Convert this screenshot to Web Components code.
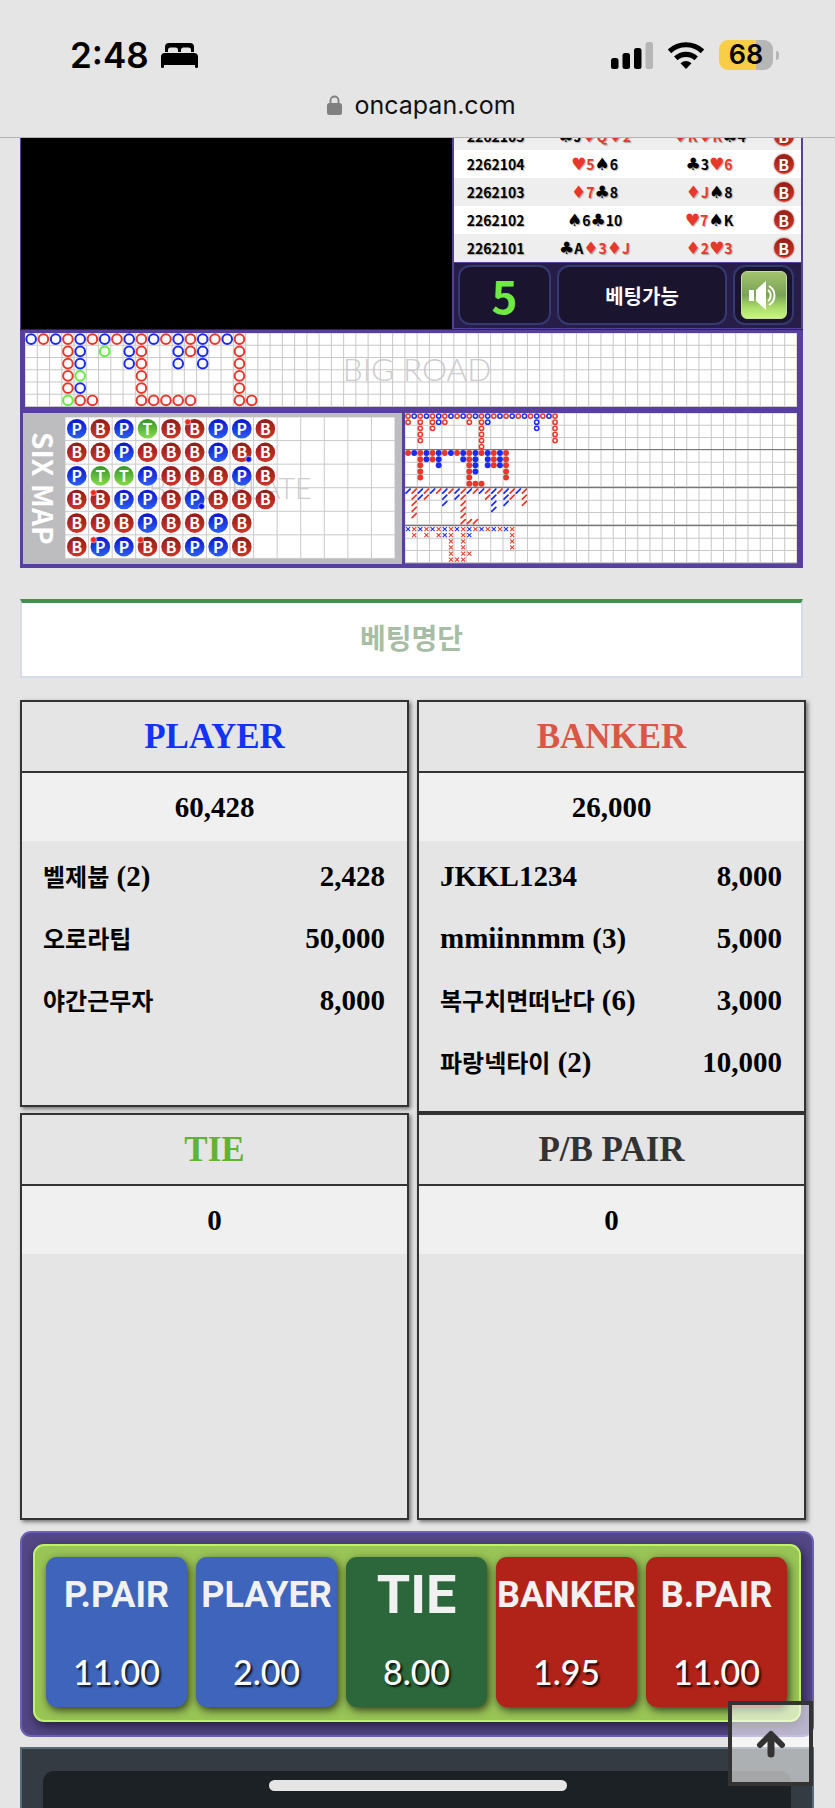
<!DOCTYPE html>
<html lang="ko">
<head>
<meta charset="utf-8">
<meta name="viewport" content="width=device-width, initial-scale=1">
<title>oncapan.com</title>
<style>
  body {
    margin: 0;
    background: #e5e5e5;
    color: #000;
    font-family: "Noto Sans CJK KR", sans-serif;
  }

  .page {
    display: flex;
    flex-direction: column;
    min-height: 100vh;
  }

  main {
    flex: 1;
    display: flex;
    flex-direction: column;
    padding: 0 21px 0 20px;
  }

  .board {
    margin-right: 11px;
    background: #56409c;
  }

  .top {
    display: grid;
    grid-template-columns: 432fr 351fr;
    height: 191px;
  }

  .video {
    background: #000;
    border-left: 1px solid #56409c;
  }

  .side {
    display: flex;
    flex-direction: column;
    border: solid #56409c;
    border-width: 0 2px;
    min-width: 0;
  }

  .lists {
    display: grid;
    grid-template-columns: 1fr 1fr;
    column-gap: 8px;
    align-items: start;
    margin: 22px 8px 11px 0;
  }
</style>
</head>
<body>
<div class="page">
  <phone-bar time="2:48" battery="68">oncapan.com</phone-bar>
  <main>
    <section class="board">
      <div class="top">
        <div class="video"></div>
        <div class="side">
          <game-history></game-history>
          <game-controls count="5">베팅가능</game-controls>
        </div>
      </div>
      <road-board></road-board>
    </section>

    <list-title>베팅명단</list-title>

    <div class="lists">
      <bet-list heading="PLAYER" color="#1432f5" total="60,428">
        <bet-row amount="2,428"><span lang="ko">벨제붑</span> (2)</bet-row>
        <bet-row amount="50,000"><span lang="ko">오로라팁</span></bet-row>
        <bet-row amount="8,000"><span lang="ko">야간근무자</span></bet-row>
      </bet-list>
      <bet-list heading="BANKER" color="#d95745" total="26,000">
        <bet-row amount="8,000">JKKL1234</bet-row>
        <bet-row amount="5,000">mmiinnmm (3)</bet-row>
        <bet-row amount="3,000"><span lang="ko">복구치면떠난다</span> (6)</bet-row>
        <bet-row amount="10,000"><span lang="ko">파랑넥타이</span> (2)</bet-row>
      </bet-list>
      <bet-list heading="TIE" color="#62b236" total="0"></bet-list>
      <bet-list heading="P/B PAIR" color="#333" total="0"></bet-list>
    </div>

    <bet-panel>
      <bet-button color="#3e65bb" odds="11.00">P.PAIR</bet-button>
      <bet-button color="#3e65bb" odds="2.00">PLAYER</bet-button>
      <bet-button color="#2b673a" odds="8.00" size="large">TIE</bet-button>
      <bet-button color="#b12318" odds="1.95">BANKER</bet-button>
      <bet-button color="#b12318" odds="11.00">B.PAIR</bet-button>
    </bet-panel>

    <chip-tray></chip-tray>
  </main>
</div>
<scroll-top></scroll-top>
<home-indicator></home-indicator>

<script>
const RED = '#e8382b';
const BLUE = '#1a2cf4';
const GREEN = '#62ee3c';

class PhoneBar extends HTMLElement {
  constructor() {
    super();
    this.attachShadow({ mode: 'open' });
  }

  connectedCallback() {
    this.shadowRoot.innerHTML = `
      <style>
        :host {
          display: block;
          box-sizing: border-box;
          height: 138px;
          padding-top: 32px;
          border-bottom: 1px solid #b4b4b4;
          font-family: Inter, sans-serif;
        }
        .status {
          display: flex;
          justify-content: space-between;
          padding: 0 56px 0 70px;
          height: 46px;
          align-items: center;
        }
        .left, .right, .url {
          display: flex;
          align-items: center;
        }
        .left { gap: 12px; }
        .right { gap: 15px; }
        .time {
          font-size: 35px;
          font-weight: 600;
        }
        .battery {
          display: flex;
          align-items: center;
          gap: 3px;
        }
        .level {
          width: 54px;
          height: 30px;
          border-radius: 9px;
          background: linear-gradient(90deg, #f8ce46 68%, #b6b6b6 68%);
          font-size: 27px;
          font-weight: 600;
          line-height: 30px;
          text-align: center;
        }
        .nub {
          width: 3px;
          height: 9px;
          border-radius: 0 3px 3px 0;
          background: #b6b6b6;
        }
        .url {
          justify-content: center;
          gap: 12px;
          height: 54px;
          padding-left: 8px;
          font-size: 25px;
          color: #111;
        }
        svg { display: block; }
      </style>
      <div class="status">
        <div class="left">
          <span class="time">${this.getAttribute('time')}</span>
          <svg width="37" height="25" viewBox="0 0 37 25">
            <path d="M4 9V4q0-4 4-4h21q4 0 4 4v5h-3V7q0-2.500-2.500-2.500h-5Q20 4.500 20 7v2h-3V7q0-2.500-2.500-2.500h-5Q7 4.500 7 7v2z"/>
            <path d="M0 14q0-4 4-4h29q4 0 4 4v10q0 1-1.500 1T34 24v-2H3v2q0 1-1.500 1T0 24z"/>
          </svg>
        </div>
        <div class="right">
          <svg width="42" height="27" viewBox="0 0 42 27">
            <rect x="0" y="16" width="7.500" height="11" rx="2.500"/>
            <rect x="11.500" y="11" width="7.500" height="16" rx="2.500"/>
            <rect x="23" y="6" width="7.500" height="21" rx="2.500"/>
            <rect x="34.500" y="0" width="7.500" height="27" rx="2.500" fill="#b6b6b6"/>
          </svg>
          <svg width="36" height="27" viewBox="0 0 36 27" fill="none" stroke="#000" stroke-width="5.200">
            <path d="M1.500 9.300a24 24 0 0 1 33 0"/>
            <path d="M7.800 16.300a15 15 0 0 1 20.400 0"/>
            <path d="M12.500 21.200Q18 17 23.500 21.200L18 27z" fill="#000" stroke="none"/>
          </svg>
          <div class="battery">
            <span class="level">${this.getAttribute('battery')}</span>
            <span class="nub"></span>
          </div>
        </div>
      </div>
      <div class="url">
        <svg width="15" height="20" viewBox="0 0 15 20">
          <path d="M3.500 9V5.500a4 4 0 0 1 8 0V9" fill="none" stroke="#808080" stroke-width="1.800"/>
          <rect y="8" width="15" height="12" rx="2.500" fill="#808080"/>
        </svg>
        <slot></slot>
      </div>
    `;
  }
}
customElements.define('phone-bar', PhoneBar);

const games = [
  ['2262105', '♣J♥Q♥2', '♥K♥K♣4'],
  ['2262104', '♥5♠6', '♣3♥6'],
  ['2262103', '♦7♣8', '♦J♠8'],
  ['2262102', '♠6♣10', '♥7♠K'],
  ['2262101', '♣A♦3♦J', '♦2♥3'],
];

class GameHistory extends HTMLElement {
  constructor() {
    super();
    this.attachShadow({ mode: 'open' });
  }

  cards(hand) {
    return hand.replace(/([♥♦♠♣])([0-9AJQK]+)/g, (m, suit, rank) => {
      const color = suit === '♥' || suit === '♦' ? 'red' : 'black';
      return `<span class="${color}"><i>${suit}</i>${rank}</span>`;
    });
  }

  connectedCallback() {
    this.shadowRoot.innerHTML = `
      <style>
        :host {
          display: flex;
          flex-direction: column;
          justify-content: flex-end;
          height: 124px;
          overflow: hidden;
        }
        table {
          flex: none;
          width: 100%;
          table-layout: fixed;
          border-collapse: collapse;
          font-size: 14px;
          font-weight: 700;
          line-height: 20px;
          text-align: center;
          text-shadow: 1px 1px 1px rgba(0, 0, 0, 0.3);
        }
        tr { height: 28px; background: #eee; }
        tr:nth-child(even) { background: #fff; }
        td { padding: 0; white-space: nowrap; }
        td:nth-child(1) { width: 24%; }
        td:nth-child(4) { width: 10%; }
        i {
          font: 17px/20px "DejaVu Sans", sans-serif;
        }
        .red { color: #e8382b; }
        .badge {
          display: block;
          width: 20px;
          height: 20px;
          margin: 0 auto;
          border-radius: 50%;
          background: linear-gradient(#981d15, #d3362b);
          box-shadow: 0 0 2px #a33;
          color: #fff;
          font-size: 16px;
        }
      </style>
      <table>
        ${games.map(([id, player, banker]) => `
          <tr>
            <td>${id}</td>
            <td>${this.cards(player)}</td>
            <td>${this.cards(banker)}</td>
            <td><span class="badge">B</span></td>
          </tr>`).join('')}
      </table>
    `;
  }
}
customElements.define('game-history', GameHistory);

class GameControls extends HTMLElement {
  constructor() {
    super();
    this.attachShadow({ mode: 'open' });
  }

  connectedCallback() {
    this.shadowRoot.innerHTML = `
      <style>
        :host {
          flex: 1;
          display: grid;
          grid-template-columns: 93fr 170fr 61fr;
          gap: 6px;
          padding: 2px 7px 3px 4px;
          border: solid #56409c;
          border-width: 1px 0;
          background: #271d49;
        }
        .box {
          display: flex;
          align-items: center;
          justify-content: center;
          border: 2px solid #343a70;
          border-radius: 12px;
          background: #1a142e;
          color: #fff;
          font-size: 20px;
          font-weight: 700;
        }
        .count {
          color: #70ea43;
          font-size: 44px;
          line-height: 50px;
        }
        button {
          display: flex;
          align-items: center;
          justify-content: center;
          width: 46px;
          height: 48px;
          padding: 0;
          border: 1px solid #c9dca8;
          border-radius: 6px;
          background: linear-gradient(#a3c36d, #79a356 50%, #a8d867 75%, #c9f67e);
        }
      </style>
      <div class="box count">${this.getAttribute('count')}</div>
      <div class="box"><slot></slot></div>
      <div class="box">
        <button type="button" aria-label="Sound">
          <svg width="30" height="30" viewBox="0 0 30 30" fill="#fff">
            <path d="M0 10h5v11H0zM7 10l10-9v29L7 21z"/>
            <path d="M19 10a7 7 0 0 1 0 11M20 6a11 11 0 0 1 0 19" fill="none" stroke="#fff" stroke-width="2"/>
          </svg>
        </button>
      </div>
    `;
  }
}
customElements.define('game-controls', GameControls);

const bigRoad = [
  'BRBRBRBRBRBRBRBRBR',
  '...RB.G.BR..BRB..R',
  '...RB...BR..B.B..R',
  '...RG....R.......R',
  '...RB....R.......R',
  '...GRR...RRRRR...RR',
];

// ' is a banker pair, , is a player pair
const sixMap = [
  "P B P T B B' P P B",
  "B B P B B B P B, B",
  "P T T P B B B P B",
  "B B' P P B P, B B B",
  "B B B P B B P B",
  "B P' P B' B P P B",
];

const smallRoads = [
  ['ring', [
    'RBRBRBRBRBRBRBRBRBRBRBRBR',
    'R.R.RBR...R.RB.......B..R',
    '..R.R.......R........B..R',
    '..R.........R...........R',
    '..R.........R...........R',
    '............R',
  ]],
  ['dot', [
    'RBRBRBRBRBRBRBRBR',
    '..RBRB...BRB.BRBR',
    '..R..B....RB.BRBR',
    '..R.......RB....R',
    '..R.......R.....R',
    '..........RRR',
  ]],
  ['slash', [
    'BRBRBRBRBRBRBRBRBRBR',
    '.RBR..B.BR...RB.BR.R',
    '.R....B..R....B.B..R',
    '.R.......R....B',
    '.R.......R',
    '.........RRR',
  ]],
  ['cross', [
    'BRBRBRBRBRBRBRBRBR',
    '.R.R.RBR.RB......R',
    '.......R.R.......R',
    '.......R.R.......R',
    '.......R.RR',
    '.......RRR',
  ]],
];

function gridLines(cols, rows, cell) {
  let d = '';
  for (let x = 0; x <= cols; x++) d += `M${x * cell} 0V${rows * cell}`;
  for (let y = 0; y <= rows; y++) d += `M0 ${y * cell}H${cols * cell}`;
  return `<path d="${d}" fill="none" stroke="#c9c9c9"/>`;
}

function eachMark(rows, draw) {
  const color = { R: RED, B: BLUE, G: GREEN };
  return rows.map((row, y) => [...row].map((c, x) =>
    c === '.' ? '' : draw(x, y, color[c])).join('')).join('');
}

class RoadBoard extends HTMLElement {
  constructor() {
    super();
    this.attachShadow({ mode: 'open' });
  }

  drawBig() {
    return `
      <svg viewBox="0 0 756 72">
        <rect width="756" height="72" fill="#fff"/>
        <text x="384" y="47" class="mark" font-size="31">BIG ROAD</text>
        ${gridLines(63, 6, 12)}
        ${eachMark(bigRoad, (x, y, c) =>
          `<circle cx="${x * 12 + 6}" cy="${y * 12 + 6}" r="4.700" fill="#fff" stroke="${c}" stroke-width="2"/>`)}
      </svg>`;
  }

  drawSix() {
    const fills = { P: 'url(#blue)', B: 'url(#red)', T: 'url(#green)' };
    let marks = '';
    sixMap.forEach((row, y) => row.split(' ').forEach((m, x) => {
      const cx = x * 24 + 12;
      const cy = y * 24 + 12;
      marks += `<circle cx="${cx}" cy="${cy}" r="10" fill="${fills[m[0]]}"/>
        <text x="${cx}" y="${cy + 6}" class="letter">${m[0]}</text>`;
      if (m[1] === "'") marks += `<circle cx="${cx - 7}" cy="${cy - 7}" r="3" fill="#f5291c" stroke="#f6c9c5" stroke-width="0.700"/>`;
      if (m[1] === ',') marks += `<circle cx="${cx + 7}" cy="${cy + 7}" r="3" fill="#0a12ee" stroke="#c9cdf6" stroke-width="0.700"/>`;
    }));
    return `
      <svg viewBox="0 0 336 144">
        <defs>
          <linearGradient id="red" x2="0" y2="1"><stop stop-color="#8f1d18"/><stop offset="1" stop-color="#cf352b"/></linearGradient>
          <linearGradient id="blue" x2="0" y2="1"><stop stop-color="#0a14cc"/><stop offset="1" stop-color="#2c60f2"/></linearGradient>
          <linearGradient id="green" x2="0" y2="1"><stop stop-color="#35942a"/><stop offset="1" stop-color="#86dd4a"/></linearGradient>
        </defs>
        <rect width="336" height="144" fill="#fff"/>
        <text x="168" y="84" class="mark" font-size="29">BEAD PLATE</text>
        ${gridLines(14, 6, 24)}
        ${marks}
      </svg>`;
  }

  drawSmall(kind, rows) {
    const shapes = {
      ring: (x, y, c) => `<circle cx="${x}" cy="${y}" r="2.100" fill="#fff" stroke="${c}" stroke-width="1.500"/>`,
      dot: (x, y, c) => `<circle cx="${x}" cy="${y}" r="2.900" fill="${c}"/>`,
      slash: (x, y, c) => `<path d="M${x - 2} ${y + 2}l4-4" stroke="${c}" stroke-width="1.700" stroke-linecap="round"/>`,
      cross: (x, y, c) => `<path d="M${x - 2} ${y - 2}l4 4m0-4l-4 4" stroke="${c}"/>`,
    };
    return `
      <svg viewBox="0 0 384 36">
        <rect width="384" height="36" fill="#fff"/>
        ${gridLines(32, 3, 12)}
        ${eachMark(rows, (x, y, c) => shapes[kind](x * 6 + 3, y * 6 + 3, c))}
      </svg>`;
  }

  connectedCallback() {
    this.shadowRoot.innerHTML = `
      <style>
        :host {
          display: block;
          padding-bottom: 4px;
        }
        svg { display: block; width: 100%; }
        .big {
          padding: 3px 6px 6px 5px;
          border-top: 1px solid #2c2640;
        }
        .lower {
          display: grid;
          grid-template-columns: 379fr 392fr;
          gap: 3px;
          padding: 0 6px 0 3px;
        }
        .six {
          display: grid;
          grid-template-columns: 42px 1fr;
          align-items: center;
          padding-right: 7px;
          background: #bdbdbf;
        }
        .label {
          writing-mode: vertical-rl;
          justify-self: center;
          color: #fff;
          font-size: 28px;
          font-weight: 700;
          line-height: 28px;
        }
        .small svg { border-bottom: 1px solid #777; }
        .mark {
          fill: #cdcdcd;
          font-family: Lato, sans-serif;
          font-weight: 300;
          text-anchor: middle;
        }
        .letter {
          fill: #fff;
          font-size: 16px;
          font-weight: 700;
          text-anchor: middle;
        }
      </style>
      <div class="big">${this.drawBig()}</div>
      <div class="lower">
        <div class="six">
          <span class="label">SIX MAP</span>
          ${this.drawSix()}
        </div>
        <div class="small">
          ${smallRoads.map(([kind, rows]) => this.drawSmall(kind, rows)).join('')}
        </div>
      </div>
    `;
  }
}
customElements.define('road-board', RoadBoard);

class ListTitle extends HTMLElement {
  constructor() {
    super();
    this.attachShadow({ mode: 'open' });
    this.shadowRoot.innerHTML = `
      <style>
        :host {
          display: block;
          margin: 31px 11px 0 0;
          padding-bottom: 4px;
          border: 2px solid #d5dbe9;
          border-top: 4px solid #43914f;
          background: #fff;
        }
        h2 {
          margin: 0;
          color: #a8bda5;
          font-size: 28px;
          font-weight: 700;
          line-height: 69px;
          text-align: center;
        }
      </style>
      <h2><slot></slot></h2>
    `;
  }
}
customElements.define('list-title', ListTitle);

class BetList extends HTMLElement {
  constructor() {
    super();
    this.attachShadow({ mode: 'open' });
  }

  connectedCallback() {
    this.shadowRoot.innerHTML = `
      <style>
        :host {
          display: block;
          box-sizing: border-box;
          min-height: 407px;
          padding-bottom: 18px;
          border: 2px solid #333;
          background: #e5e5e5;
          box-shadow: 2px 2px 4px rgba(0, 0, 0, 0.5);
          font-family: "Liberation Serif", "Noto Sans CJK KR", serif;
          font-weight: 700;
        }
        h3 {
          margin: 0;
          border-bottom: 2px solid #333;
          color: ${this.getAttribute('color')};
          font-size: 35px;
          line-height: 69px;
          text-align: center;
        }
        .total {
          margin-bottom: 4px;
          background: #f0f0f0;
          font-size: 29px;
          line-height: 68px;
          text-align: center;
        }
      </style>
      <h3>${this.getAttribute('heading')}</h3>
      <div class="total">${this.getAttribute('total')}</div>
      <slot></slot>
    `;
  }
}
customElements.define('bet-list', BetList);

class BetRow extends HTMLElement {
  constructor() {
    super();
    this.attachShadow({ mode: 'open' });
  }

  connectedCallback() {
    this.shadowRoot.innerHTML = `
      <style>
        :host {
          display: flex;
          justify-content: space-between;
          height: 62px;
          padding: 0 22px 0 21px;
          font-size: 29px;
          line-height: 62px;
          white-space: nowrap;
        }
        ::slotted([lang="ko"]) { font-size: 24px; }
      </style>
      <span><slot></slot></span>
      <span>${this.getAttribute('amount')}</span>
    `;
  }
}
customElements.define('bet-row', BetRow);

class BetPanel extends HTMLElement {
  constructor() {
    super();
    this.attachShadow({ mode: 'open' });
    this.shadowRoot.innerHTML = `
      <style>
        :host {
          display: block;
          padding: 11px 11px 13px;
          border: 2px solid #6c61b2;
          border-radius: 11px;
          background: #544786;
        }
        .felt {
          display: grid;
          grid-template-columns: repeat(5, 1fr);
          gap: 9px;
          padding: 11px 12px 13px 11px;
          border: 2px solid #bff26b;
          border-radius: 11px;
          background: #99c456;
          box-shadow: 2px 4px 12px rgba(0, 0, 0, 0.6);
        }
      </style>
      <div class="felt"><slot></slot></div>
    `;
  }
}
customElements.define('bet-panel', BetPanel);

class BetButton extends HTMLElement {
  constructor() {
    super();
    this.attachShadow({ mode: 'open' });
  }

  connectedCallback() {
    const size = this.getAttribute('size') === 'large' ? 54 : 36;

    this.shadowRoot.innerHTML = `
      <style>
        :host { display: block; min-width: 0; }
        button {
          display: flex;
          flex-direction: column;
          align-items: center;
          justify-content: space-between;
          width: 100%;
          height: 150px;
          padding: 8px 0;
          border: 0;
          border-radius: 11px;
          background: ${this.getAttribute('color')};
          box-shadow: 2px 3px 8px rgba(0, 0, 0, 0.7);
          color: #f1f1f1;
          white-space: nowrap;
        }
        .name {
          font: 700 ${size}px/60px Roboto, sans-serif;
        }
        .odds {
          color: #fff;
          font: 500 34px/54px Lato, sans-serif;
          text-shadow: 2px 2px 2px rgba(0, 0, 0, 0.8);
        }
      </style>
      <button type="button">
        <span class="name"><slot></slot></span>
        <span class="odds">${this.getAttribute('odds')}</span>
      </button>
    `;
  }
}
customElements.define('bet-button', BetButton);

class ChipTray extends HTMLElement {
  constructor() {
    super();
    this.attachShadow({ mode: 'open' });
    this.shadowRoot.innerHTML = `
      <style>
        :host {
          flex: 1;
          display: flex;
          margin-top: 10px;
          padding: 22px 21px 0;
          border: solid #5a6c78;
          border-width: 2px 2px 0;
          background: #343b43;
        }
        .tray {
          flex: 1;
          border-radius: 11px 11px 0 0;
          background: #1c2125;
        }
      </style>
      <div class="tray"></div>
    `;
  }
}
customElements.define('chip-tray', ChipTray);

class ScrollTop extends HTMLElement {
  constructor() {
    super();
    this.attachShadow({ mode: 'open' });
    this.shadowRoot.innerHTML = `
      <style>
        :host {
          position: fixed;
          right: 22px;
          bottom: 22px;
        }
        button {
          display: flex;
          align-items: center;
          justify-content: center;
          width: 85px;
          height: 85px;
          padding: 0;
          border: 4px solid #333;
          background: rgba(255, 255, 255, 0.6);
        }
      </style>
      <button type="button" aria-label="Top">
        <svg width="30" height="28" viewBox="0 0 30 28" fill="none" stroke="#333" stroke-linecap="round" stroke-linejoin="round">
          <path d="M4 15L15 4l11 11" stroke-width="6"/>
          <path d="M15 6v18" stroke-width="7"/>
        </svg>
      </button>
    `;
  }
}
customElements.define('scroll-top', ScrollTop);

class HomeIndicator extends HTMLElement {
  constructor() {
    super();
    this.attachShadow({ mode: 'open' });
    this.shadowRoot.innerHTML = `
      <style>
        :host {
          position: fixed;
          inset: auto 0 17px;
          width: 298px;
          height: 11px;
          margin: 0 auto;
          border-radius: 6px;
          background: #e5e5e5;
        }
      </style>
    `;
  }
}
customElements.define('home-indicator', HomeIndicator);
</script>
</body>
</html>
